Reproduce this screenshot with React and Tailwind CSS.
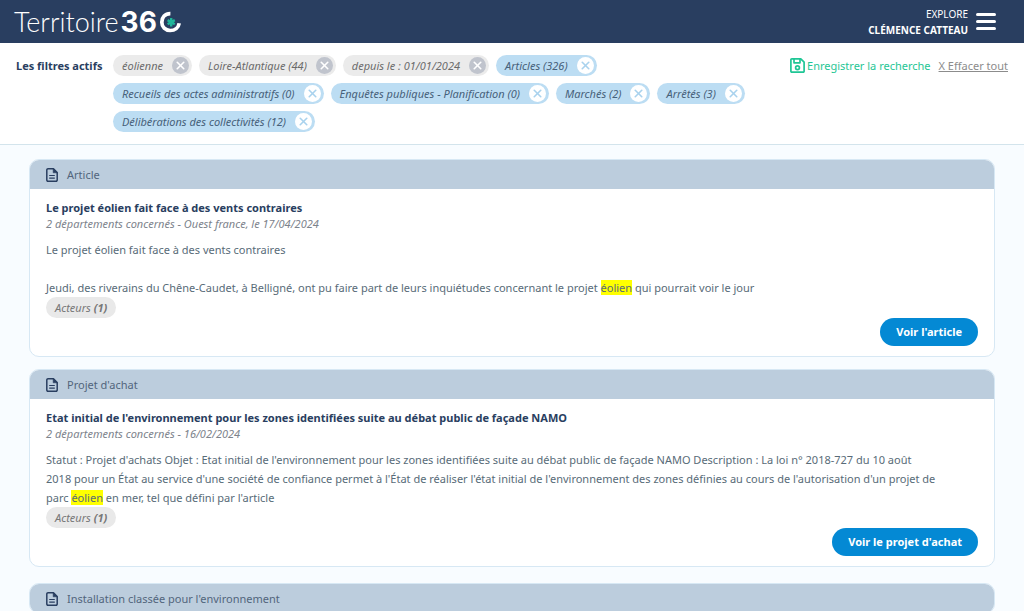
import { X } from "lucide-react";

const filters = [
  { label: "éolienne", type: "criteria" },
  { label: "Loire-Atlantique (44)", type: "criteria" },
  { label: "depuis le : 01/01/2024", type: "criteria" },
  { label: "Articles (326)", type: "source" },
  { label: "Recueils des actes administratifs (0)", type: "source" },
  { label: "Enquêtes publiques - Planification (0)", type: "source" },
  { label: "Marchés (2)", type: "source" },
  { label: "Arrêtés (3)", type: "source" },
  { label: "Délibérations des collectivités (12)", type: "source" },
];

function Logo() {
  return (
    <a
      href="#"
      aria-label="Territoire360"
      className="flex items-center gap-0.5 font-['Lato'] text-[27px] leading-8 text-white"
    >
      <span className="font-light">Territoire</span>
      <span className="font-['Inter'] text-[28px] font-bold">36</span>
      <svg width="23" height="22" viewBox="0 0 23 22" fill="none" aria-hidden="true">
        <path
          d="M11.400 2.600C6 2.500 2.800 6.500 2.800 11.200c0 4.900 3.600 8.300 8.400 8.300 4.700 0 8.300-3 9-7.300"
          stroke="white"
          strokeWidth="3.700"
        />
        <path
          d="M12.200 7v8.400M8.600 9.100l7.200 4.200M15.800 9.100l-7.200 4.200"
          stroke="#1fb59a"
          strokeWidth="2.400"
        />
      </svg>
    </a>
  );
}

function DocumentIcon() {
  return (
    <svg
      width="12"
      height="14"
      viewBox="0 0 12 14"
      fill="none"
      stroke="#293e60"
      strokeWidth="1.5"
      strokeLinejoin="round"
      aria-hidden="true"
    >
      <path d="M2 .8h5.500l3.700 3.700V12a1.200 1.200 0 0 1-1.200 1.200H2A1.200 1.200 0 0 1 .8 12V2A1.200 1.200 0 0 1 2 .8z" />
      <path d="M7.200.8l4 4h-4z" fill="#293e60" strokeWidth=".6" />
      <path d="M3.200 7.500h5.600M3.200 10.200h5.600" strokeWidth="1.200" />
    </svg>
  );
}

function SaveIcon() {
  return (
    <svg
      width="15"
      height="15"
      viewBox="0 0 15 15"
      fill="none"
      stroke="currentColor"
      strokeWidth="1.700"
      strokeLinejoin="round"
      aria-hidden="true"
    >
      <path d="M1.800.9h9l3.300 3.300v9a.9.9 0 0 1-.9.9H1.800a.9.9 0 0 1-.9-.9V1.800a.9.9 0 0 1 .9-.9z" />
      <path d="M4 1v3.800h6V1" />
      <circle cx="7.500" cy="9.700" r="1.900" />
    </svg>
  );
}

function FilterPill({ label, type }) {
  const isSource = type === "source";

  return (
    <li
      className={`flex h-[21px] items-center gap-[9px] rounded-full pr-[3px] pl-[9px] italic ${
        isSource ? "bg-[#bcddf3] text-[#47617a]" : "bg-[#ebebeb] text-[#6b6b6b]"
      }`}
    >
      {label}
      <button
        type="button"
        aria-label={`Retirer ${label}`}
        className={`flex size-[17px] items-center justify-center rounded-full ${
          isSource ? "bg-white text-[#a9d2ed]" : "bg-[#c0c4cd] text-white"
        }`}
      >
        <X size={13} strokeWidth={3} />
      </button>
    </li>
  );
}

function ResultCard({ category, title, meta, action, children }) {
  return (
    <article className="overflow-hidden rounded-[10px] border border-[#d7e8f4] bg-white">
      <header className="flex h-[29px] items-center gap-2 bg-[#bccddd] px-4 text-[#52657c]">
        <DocumentIcon />
        <span className="pl-px">{category}</span>
      </header>
      {title && (
        <div className="flex flex-col px-4 py-2.5">
          <h2 className="leading-[17px] font-bold text-[#293e60]">{title}</h2>
          <p className="text-[#7d838c] italic">{meta}</p>
          <div className="mt-2 leading-[19px] text-[#586b78]">{children}</div>
          <button
            type="button"
            className="h-[21px] self-start rounded-full bg-[#e9e9e9] px-[9px] text-[#777] italic"
          >
            Acteurs <b>(1)</b>
          </button>
          <button
            type="button"
            className="h-7 self-end rounded-full bg-[#0489d4] px-4 font-bold text-white"
          >
            {action}
          </button>
        </div>
      )}
    </article>
  );
}

function Highlight({ children }) {
  return <mark className="bg-[#ffff00] text-inherit">{children}</mark>;
}

export default function App() {
  return (
    <div className="h-screen overflow-hidden bg-[#f8fcff] font-['Noto_Sans',sans-serif] text-[11px] leading-4">
      <header className="flex h-[43px] items-center justify-between bg-[#293e60] pr-7 pl-3.5 text-white">
        <Logo />
        <div className="flex items-center gap-2">
          <div className="text-right text-[10px] leading-4">
            <p>EXPLORE</p>
            <p className="font-bold">CLÉMENCE CATTEAU</p>
          </div>
          <button type="button" aria-label="Menu" className="flex w-5 flex-col gap-1">
            <span className="h-[3px] rounded-full bg-white" />
            <span className="h-[3px] rounded-full bg-white" />
            <span className="h-[3px] rounded-full bg-white" />
          </button>
        </div>
      </header>

      <section className="flex items-start justify-between border-b border-[#d3e4ec] bg-white px-4 pt-3 pb-3">
        <h1 className="w-[97px] shrink-0 leading-[21px] font-bold text-[#293e60]">
          Les filtres actifs
        </h1>
        <ul className="flex max-w-[640px] flex-1 flex-wrap gap-[7px]">
          {filters.map((filter) => (
            <FilterPill key={filter.label} {...filter} />
          ))}
        </ul>
        <div className="ml-auto flex shrink-0 items-center gap-2 leading-[21px]">
          <button type="button" className="flex items-center gap-0.5 text-[#1fc695]">
            <SaveIcon />
            Enregistrer la recherche
          </button>
          <button type="button" className="text-[#8c8c8c] underline">
            X Effacer tout
          </button>
        </div>
      </section>

      <main className="flex flex-col gap-4 px-[29px] pt-3.5">
        <div className="flex flex-col gap-3">
          <ResultCard
            category="Article"
            title="Le projet éolien fait face à des vents contraires"
            meta="2 départements concernés - Ouest france, le 17/04/2024"
            action="Voir l'article"
          >
            <p>Le projet éolien fait face à des vents contraires</p>
            <br />
            <p>
              Jeudi, des riverains du Chêne-Caudet, à Belligné, ont pu faire part de leurs
              inquiétudes concernant le projet <Highlight>éolien</Highlight> qui pourrait voir le
              jour
            </p>
          </ResultCard>
          <ResultCard
            category="Projet d'achat"
            title="Etat initial de l'environnement pour les zones identifiées suite au débat public de façade NAMO"
            meta="2 départements concernés - 16/02/2024"
            action="Voir le projet d'achat"
          >
            <p>
              Statut : Projet d'achats Objet : Etat initial de l'environnement pour les zones
              identifiées suite au débat public de façade NAMO Description : La loi n° 2018-727 du
              10 août
              <br />
              2018 pour un État au service d'une société de confiance permet à l'État de réaliser
              l'état initial de l'environnement des zones définies au cours de l'autorisation d'un
              projet de
              <br />
              parc <Highlight>éolien</Highlight> en mer, tel que défini par l'article
            </p>
          </ResultCard>
        </div>
        <ResultCard category="Installation classée pour l'environnement" />
      </main>
    </div>
  );
}
